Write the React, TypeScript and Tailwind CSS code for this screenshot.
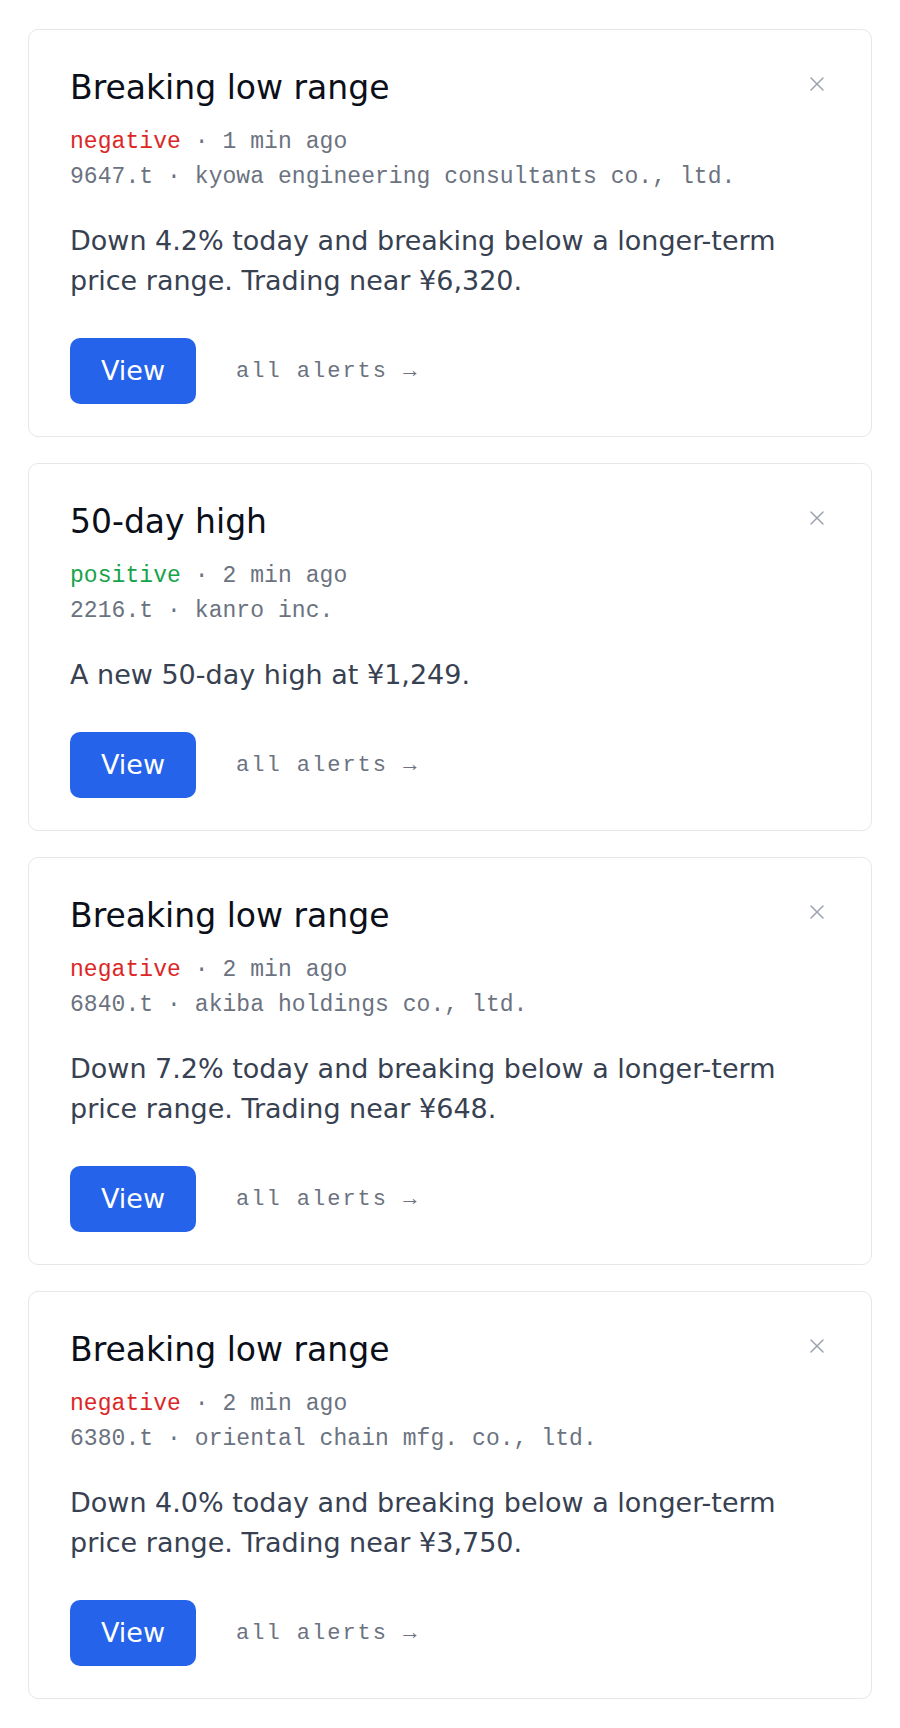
import { X } from 'lucide-react';

type Tone = 'negative' | 'positive';

interface AlertItem {
  id: string;
  title: string;
  tone: Tone;
  age: string;
  ticker: string;
  company: string;
  body: string;
}

const alerts: AlertItem[] = [
  {
    id: 'a1',
    title: 'Breaking low range',
    tone: 'negative',
    age: '1 min ago',
    ticker: '9647.t',
    company: 'kyowa engineering consultants co., ltd.',
    body: 'Down 4.2% today and breaking below a longer-term price range. Trading near ¥6,320.',
  },
  {
    id: 'a2',
    title: '50-day high',
    tone: 'positive',
    age: '2 min ago',
    ticker: '2216.t',
    company: 'kanro inc.',
    body: 'A new 50-day high at ¥1,249.',
  },
  {
    id: 'a3',
    title: 'Breaking low range',
    tone: 'negative',
    age: '2 min ago',
    ticker: '6840.t',
    company: 'akiba holdings co., ltd.',
    body: 'Down 7.2% today and breaking below a longer-term price range. Trading near ¥648.',
  },
  {
    id: 'a4',
    title: 'Breaking low range',
    tone: 'negative',
    age: '2 min ago',
    ticker: '6380.t',
    company: 'oriental chain mfg. co., ltd.',
    body: 'Down 4.0% today and breaking below a longer-term price range. Trading near ¥3,750.',
  },
];

function AlertCard({ alert }: { alert: AlertItem }) {
  const toneClass = alert.tone === 'negative' ? 'text-[#dc2626]' : 'text-[#16a34a]';

  return (
    <div className="rounded-[10px] border border-[#e5e7eb] bg-white pl-[41px] pr-[40px] pt-[40px] pb-[32px]">
      <div className="flex items-start justify-between">
        <h2 className="text-[33px] leading-[36px] font-normal text-[#0b0f19]">{alert.title}</h2>
        <button
          type="button"
          aria-label="dismiss"
          className="flex h-[28px] w-[28px] items-center justify-center text-[#9ca3af]"
        >
          <X size={24} strokeWidth={1.5} />
        </button>
      </div>

      <div className="mt-[19px] font-['Liberation_Mono',monospace] text-[23px] leading-[34.5px] tracking-[0.06px] text-[#6b7280]">
        <p>
          <span className={toneClass}>{alert.tone}</span> · {alert.age}
        </p>
        <p>
          {alert.ticker} · {alert.company}
        </p>
      </div>

      <p className="mt-[27px] text-[27px] leading-[40px] text-[#374151]">{alert.body}</p>

      <div className="mt-[37px] flex items-center gap-[40px]">
        <button
          type="button"
          className="flex h-[66px] w-[126px] items-center justify-center rounded-[10px] bg-[#2563eb] text-[27px] text-white"
        >
          View
        </button>
        <a
          href="#"
          className="font-['Liberation_Mono',monospace] text-[22px] tracking-[2px] text-[#6b7280]"
        >
          all alerts →
        </a>
      </div>
    </div>
  );
}

export default function App() {
  return (
    <div className="min-h-screen bg-white px-[28px] py-[29px] font-['DejaVu_Sans',sans-serif]">
      <div className="flex flex-col gap-[26px]">
        {alerts.map((alert) => (
          <AlertCard key={alert.id} alert={alert} />
        ))}
      </div>
    </div>
  );
}
